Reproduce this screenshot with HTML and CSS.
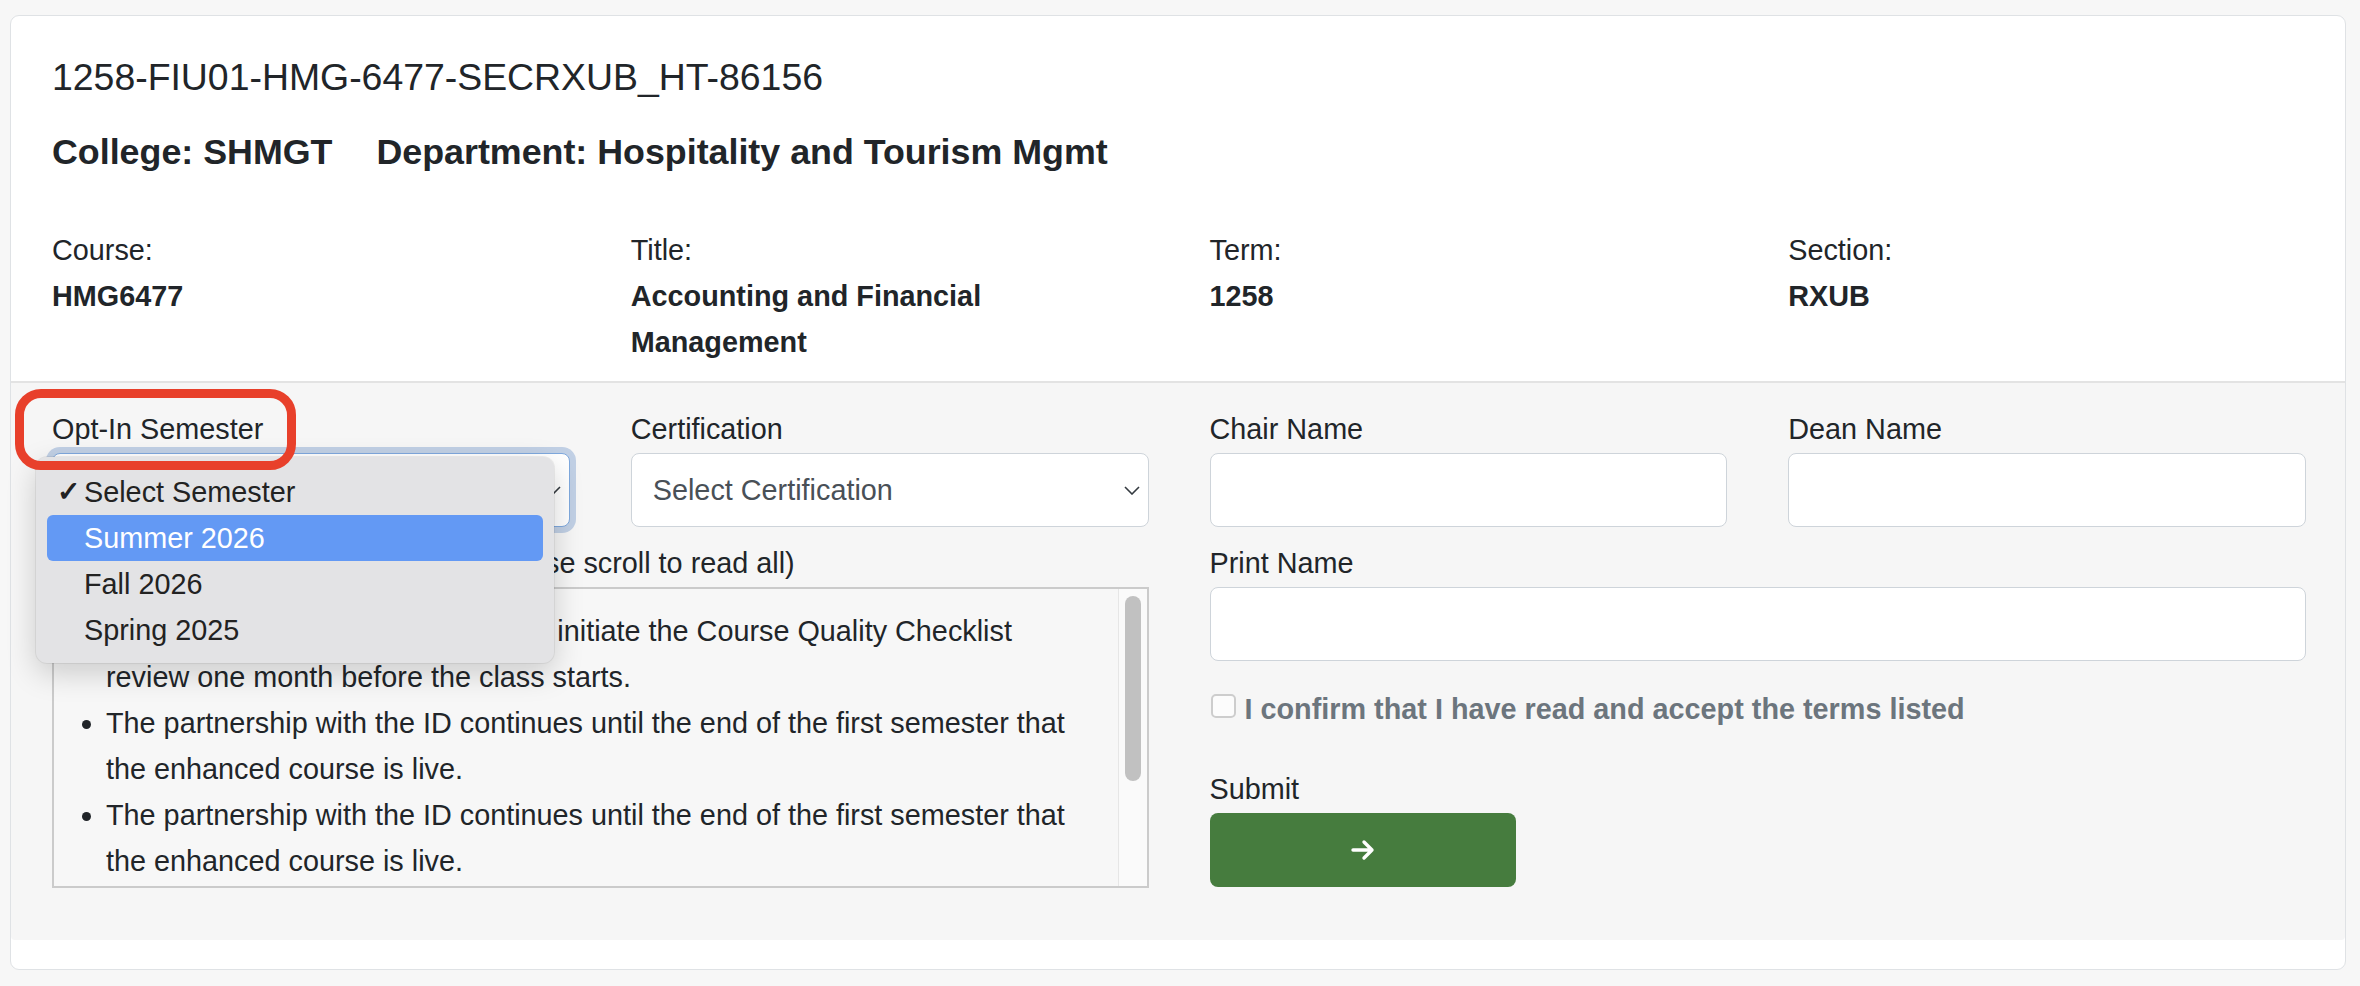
FILE: index.html
```html
<!DOCTYPE html>
<html lang="en">
<head>
    <meta charset="UTF-8">
    <meta name="viewport" content="width=device-width, initial-scale=1.0">
    <title>Course Opt-In</title>
    <link rel="stylesheet" href="styles.css">
</head>
<body>
    <div class="card">
        <!-- Course header -->
        <div class="card-head">
            <h4 class="course-id">1258-FIU01-HMG-6477-SECRXUB_HT-86156</h4>
            <h5 class="course-org">
                <span>College: SHMGT</span>
                <span>Department: Hospitality and Tourism Mgmt</span>
            </h5>
            <div class="info-row">
                <div class="info">
                    <div>Course:</div>
                    <div class="info-value">HMG6477</div>
                </div>
                <div class="info">
                    <div>Title:</div>
                    <div class="info-value">Accounting and Financial Management</div>
                </div>
                <div class="info">
                    <div>Term:</div>
                    <div class="info-value">1258</div>
                </div>
                <div class="info">
                    <div>Section:</div>
                    <div class="info-value">RXUB</div>
                </div>
            </div>
        </div>

        <!-- Opt-in form -->
        <form class="card-form">
            <div class="form-half">
                <div class="field semester-field">
                    <label class="field-label">Opt-In Semester</label>
                    <div class="control select is-focused">
                        <span>Select Semester</span>
                        <svg class="chevron" width="16" height="9" viewBox="0 0 16 9"><polyline points="1,1 8,8 15,1" fill="none" stroke="#343a40" stroke-width="1.6"/></svg>
                    </div>
                    <ul class="select-menu">
                        <li class="menu-item"><span class="menu-check">&#10003;</span>Select Semester</li>
                        <li class="menu-item is-active"><span class="menu-check"></span>Summer 2026</li>
                        <li class="menu-item"><span class="menu-check"></span>Fall 2026</li>
                        <li class="menu-item"><span class="menu-check"></span>Spring 2025</li>
                    </ul>
                    <div class="annotation"></div>
                </div>
                <div class="field">
                    <label class="field-label">Certification</label>
                    <div class="control select">
                        <span>Select Certification</span>
                        <svg class="chevron" width="16" height="9" viewBox="0 0 16 9"><polyline points="1,1 8,8 15,1" fill="none" stroke="#343a40" stroke-width="1.6"/></svg>
                    </div>
                </div>
                <div class="field field-wide field-last">
                    <label class="field-label">Partnership terms and conditions (please scroll to read all)</label>
                    <div class="terms-box">
                        <div class="terms-content">
                            <ul>
                                <li>The faculty member and the ID will initiate the Course Quality Checklist review one month before the class starts.</li>
                                <li>The partnership with the ID continues until the end of the first semester that the enhanced course is live.</li>
                                <li>The partnership with the ID continues until the end of the first semester that the enhanced course is live.</li>
                                <li>The faculty member agrees to meet with the ID during the development period of the course.</li>
                                <li>All enhancements must be approved by the Chair.</li>
                            </ul>
                        </div>
                        <div class="terms-scroll"><div class="terms-thumb"></div></div>
                    </div>
                </div>
            </div>

            <div class="form-half">
                <div class="field">
                    <label class="field-label">Chair Name</label>
                    <input class="control" type="text">
                </div>
                <div class="field">
                    <label class="field-label">Dean Name</label>
                    <input class="control" type="text">
                </div>
                <div class="field field-wide print-field">
                    <label class="field-label">Print Name</label>
                    <input class="control" type="text">
                </div>
                <label class="check-row field-wide">
                    <input type="checkbox" class="check-box">
                    I confirm that I have read and accept the terms listed
                </label>
                <div class="field field-wide field-last">
                    <label class="field-label">Submit</label>
                    <button type="button" class="submit-btn">
                        <svg width="26" height="24" viewBox="0 0 26 24"><path d="M3 12h19M14 4l8 8-8 8" fill="none" stroke="#fff" stroke-width="3.4" stroke-linecap="round" stroke-linejoin="round"/></svg>
                    </button>
                </div>
            </div>
        </form>
    </div>
</body>
</html>
```

FILE: styles.css
```css
body {
    margin: 0;
    background: #f7f7f7;
    font-family: "Liberation Sans", Arial, sans-serif;
    font-size: 28.8px;
    line-height: 46px;
    color: #212529;
}

.card {
    margin: 15px 14px 0 10px;
    background: #fff;
    border: 1px solid #dfe2e5;
    border-radius: 9px;
    padding-bottom: 29px;
}
.card-head {
    padding: 39px 39px 16px 41px;
}
.course-id {
    margin: 0 0 32px;
    font-size: 37.4px;
    font-weight: 400;
    line-height: 44px;
}
.course-org {
    display: flex;
    gap: 44px;
    margin: 0 0 53px;
    font-size: 35.8px;
    font-weight: 700;
    line-height: 43px;
}
.info-row {
    display: grid;
    grid-template-columns: repeat(4, 1fr);
    column-gap: 61px;
}
.info-value {
    font-weight: 700;
}

.card-form {
    display: grid;
    grid-template-columns: 1fr 1fr;
    column-gap: 61px;
    padding: 23px 39px 52px 41px;
    background: #f6f6f6;
    border-top: 2px solid #e3e3e3;
    border-radius: 0 0 4px 4px;
}
.form-half {
    display: grid;
    grid-template-columns: 1fr 1fr;
    column-gap: 61px;
    align-content: start;
}
.field {
    margin-bottom: 13px;
}
.field-last {
    margin-bottom: 0;
}
.field-wide {
    grid-column: span 2;
}
.field-label {
    display: block;
    line-height: 46px;
    margin-bottom: 1px;
}
.control {
    display: block;
    width: 100%;
    height: 74px;
    box-sizing: border-box;
    border: 1px solid #ced4da;
    border-radius: 8px;
    background: #fff;
    font: inherit;
}

/* fake select */
.select {
    display: flex;
    align-items: center;
    justify-content: space-between;
    padding: 0 8px 0 21px;
    color: #495057;
}
.select.is-focused {
    border-color: #7fa9de;
    box-shadow: 0 0 0 6px rgba(70, 120, 190, 0.3);
}

.semester-field {
    position: relative;
}
.select-menu {
    position: absolute;
    left: -16px;
    top: 51px;
    z-index: 2;
    width: 518px;
    box-sizing: border-box;
    margin: 0;
    padding: 12px 11px 10px;
    list-style: none;
    background: #e3e3e5;
    border-radius: 11px;
    box-shadow: 0 10px 30px rgba(0, 0, 0, 0.18), 0 0 0 1px rgba(0, 0, 0, 0.06);
}
.menu-item {
    display: flex;
    height: 46px;
    color: #222;
    border-radius: 6px;
}
.menu-item.is-active {
    background: #6399f4;
    color: #fff;
}
.menu-check {
    width: 37px;
    padding-left: 10px;
    box-sizing: border-box;
    font-size: 28px;
    font-weight: 700;
}
.annotation {
    position: absolute;
    left: -37px;
    top: -17px;
    z-index: 3;
    width: 281px;
    height: 81px;
    box-sizing: border-box;
    border: 9px solid #e8402b;
    border-radius: 26px;
}

/* terms box with a drawn scrollbar */
.terms-box {
    display: flex;
    height: 301px;
    box-sizing: border-box;
    border: 2px solid #cbcbcb;
    background: #f7f7f7;
    overflow: hidden;
}
.terms-content {
    flex: 1;
    padding: 19px 30px 0 0;
}
.terms-content ul {
    margin: 0;
    padding-left: 52px;
}
.terms-scroll {
    width: 28px;
    flex-shrink: 0;
    background: #fafafa;
    border-left: 1px solid #e6e6e6;
}
.terms-thumb {
    width: 16px;
    height: 185px;
    margin: 7px 0 0 6px;
    border-radius: 8px;
    background: #c1c1c1;
}

.print-field {
    margin-bottom: 25px;
}
.check-row {
    display: flex;
    align-items: flex-start;
    margin-bottom: 34px;
    font-weight: 700;
    color: #6c757d;
}
.check-box {
    appearance: none;
    width: 25px;
    height: 24px;
    margin: 8px 9px 0 1px;
    border: 2px solid #cdcdcd;
    border-radius: 5px;
    background: #fcfcfc;
}
.submit-btn {
    display: flex;
    align-items: center;
    justify-content: center;
    width: 306px;
    height: 74px;
    border: none;
    border-radius: 8px;
    background: #467c3e;
    cursor: pointer;
}
```
